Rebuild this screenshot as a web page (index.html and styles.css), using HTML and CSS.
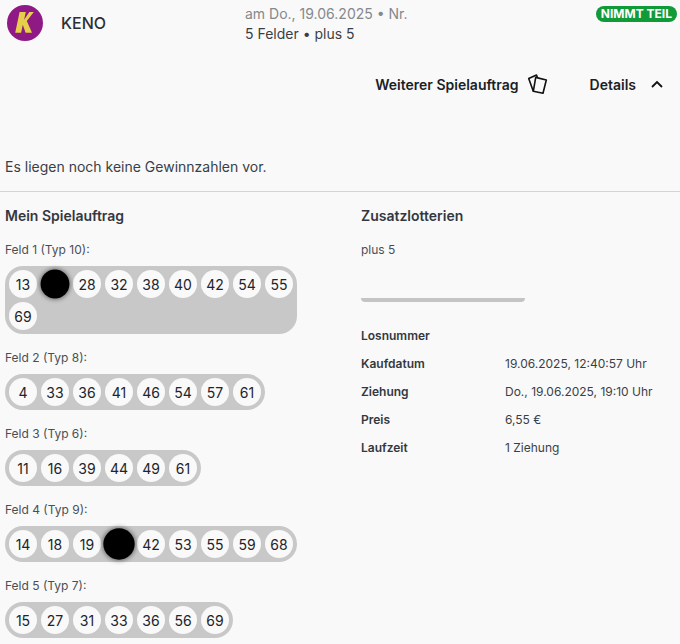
FILE: index.html
```html
<!DOCTYPE html>
<html lang="de">
<head>
<meta charset="utf-8">
<title>KENO</title>
<link rel="stylesheet" href="styles.css">
</head>
<body>
<header class="top">
  <div class="brand">
    <svg class="logo" viewBox="0 0 36 36" aria-hidden="true"><circle cx="18" cy="18" r="18" fill="#8f1a85"/><path d="M12.6 7h6.2l-1.7 7.8L22.4 7h4.4l-7 9 5.200 11.700h-6.400L15.800 19.800l-1.700 7.900H8.200z" fill="#e6d04a"/></svg>
    <span class="brand-name">KENO</span>
  </div>
  <div class="summary">
    <div class="summary-date">am Do., 19.06.2025 • Nr.</div>
    <div class="summary-fields">5 Felder • plus 5</div>
  </div>
  <span class="badge">NIMMT TEIL</span>
</header>
<div class="actions">
  <span class="action">Weiterer Spielauftrag</span>
  <svg class="cards" viewBox="0 0 20 20" fill="none" stroke="#111" stroke-width="1.600" stroke-linejoin="round" aria-hidden="true"><path d="M7.700 3.400 18.300 6 15 19.300 5.300 17.300z"/><path d="M5.300 17.300.7 4.500 8.500 1 9.500 3.800"/></svg>
  <span class="action details">Details</span>
  <svg class="chevron" viewBox="0 0 12 8" fill="none" stroke="#111" stroke-width="1.800" aria-hidden="true"><path d="M1 7l5-5 5 5"/></svg>
</div>
<p class="notice">Es liegen noch keine Gewinnzahlen vor.</p>
<hr class="rule">
<main class="columns">
  <section class="order">
    <h2>Mein Spielauftrag</h2>
    <div class="field-label">Feld 1 (Typ 10):</div>
    <div class="pill wide">
      <span class="ball">13</span><span class="ball hit"></span><span class="ball">28</span><span class="ball">32</span><span class="ball">38</span><span class="ball">40</span><span class="ball">42</span><span class="ball">54</span><span class="ball">55</span><span class="ball">69</span>
    </div>
    <div class="field-label">Feld 2 (Typ 8):</div>
    <div class="pill">
      <span class="ball">4</span><span class="ball">33</span><span class="ball">36</span><span class="ball">41</span><span class="ball">46</span><span class="ball">54</span><span class="ball">57</span><span class="ball">61</span>
    </div>
    <div class="field-label">Feld 3 (Typ 6):</div>
    <div class="pill">
      <span class="ball">11</span><span class="ball">16</span><span class="ball">39</span><span class="ball">44</span><span class="ball">49</span><span class="ball">61</span>
    </div>
    <div class="field-label">Feld 4 (Typ 9):</div>
    <div class="pill">
      <span class="ball">14</span><span class="ball">18</span><span class="ball">19</span><span class="ball hit big"></span><span class="ball">42</span><span class="ball">53</span><span class="ball">55</span><span class="ball">59</span><span class="ball">68</span>
    </div>
    <div class="field-label">Feld 5 (Typ 7):</div>
    <div class="pill">
      <span class="ball">15</span><span class="ball">27</span><span class="ball">31</span><span class="ball">33</span><span class="ball">36</span><span class="ball">56</span><span class="ball">69</span>
    </div>
  </section>
  <section class="extras">
    <h2>Zusatzlotterien</h2>
    <div class="field-label">plus 5</div>
    <div class="empty-pill"></div>
    <dl class="facts">
      <dt>Losnummer</dt><dd></dd>
      <dt>Kaufdatum</dt><dd>19.06.2025, 12:40:57 Uhr</dd>
      <dt>Ziehung</dt><dd>Do., 19.06.2025, 19:10 Uhr</dd>
      <dt>Preis</dt><dd>6,55 €</dd>
      <dt>Laufzeit</dt><dd>1 Ziehung</dd>
    </dl>
  </section>
</main>
</body>
</html>
```
FILE: styles.css
```css
* { box-sizing: border-box; }
html, body { height: 644px; overflow: hidden; }
body {
  margin: 0;
  background: #f9f9f9;
  color: #33383f;
  font-family: Inter, "Liberation Sans", sans-serif;
  font-size: 14px;
}
.top {
  display: flex;
  align-items: flex-start;
  height: 71px;
  padding: 5px 3px 0 7px;
}
.brand {
  display: flex;
  align-items: center;
  width: 238px;
  flex: none;
}
.logo { width: 36px; height: 36px; flex: none; }
.brand-name {
  margin-left: 18px;
  font-size: 16px;
  font-weight: 500;
  color: #2b3038;
}
.summary { flex: 1; margin-top: -1px; line-height: 20px; }
.summary-date { color: #85888c; }
.summary-fields { color: #3a3f46; }
.badge {
  margin-top: 1px;
  height: 16px;
  padding: 0 5px;
  border-radius: 8px;
  background: #119a38;
  color: #fff;
  font-size: 12px;
  font-weight: 700;
  line-height: 16px;
  white-space: nowrap;
}
.actions {
  display: flex;
  align-items: center;
  justify-content: flex-end;
  height: 26px;
  padding-right: 17px;
}
.action { font-weight: 600; color: #1b1f27; font-size: 14px; }
.cards { width: 20px; height: 20px; margin-left: 9px; overflow: visible; }
.details { margin-left: 42px; }
.chevron { width: 12px; height: 8px; margin-left: 15px; }
.notice {
  margin: 60px 0 0;
  padding-left: 5px;
  line-height: 20px;
  color: #3a3f46;
}
.rule {
  margin: 14px 0 0;
  border: 0;
  border-top: 1px solid #d4d4d4;
}
.columns {
  display: grid;
  grid-template-columns: 356px 1fr;
  padding-left: 5px;
}
h2 {
  margin: 15px 0 0;
  font-size: 14px;
  font-weight: 600;
  line-height: 17px;
  color: #33383f;
}
.field-label {
  margin-top: 17px;
  font-size: 12px;
  line-height: 17px;
  color: #4a4f57;
}
.order .field-label { margin-top: 15px; }
.order h2 + .field-label { margin-top: 17px; }
.pill {
  display: flex;
  flex-wrap: wrap;
  gap: 4px;
  width: fit-content;
  max-width: 292px;
  margin-top: 8px;
  padding: 4px;
  border-radius: 18px;
  background: #c8c8c8;
}
.ball {
  display: flex;
  align-items: center;
  justify-content: center;
  width: 28px;
  height: 28px;
  border-radius: 50%;
  background: #f9f9f9;
  font-size: 14px;
  color: #20242b;
}
.hit {
  background: #000;
  transform: scale(1.03);
  box-shadow: 0 0 4px 1px rgba(0, 0, 0, 0.45);
}
.big { transform: scale(1.12); }
.empty-pill {
  width: 164px;
  height: 4px;
  margin-top: 40px;
  border-radius: 0 0 4px 4px;
  background: #c4c4c4;
}
.facts {
  display: grid;
  grid-template-columns: 144px 1fr;
  grid-auto-rows: 28px;
  align-items: center;
  margin: 19px 0 0;
  font-size: 12px;
}
.facts dt { font-weight: 600; color: #33383f; }
.facts dd { margin: 0; color: #3a3f46; }
```
